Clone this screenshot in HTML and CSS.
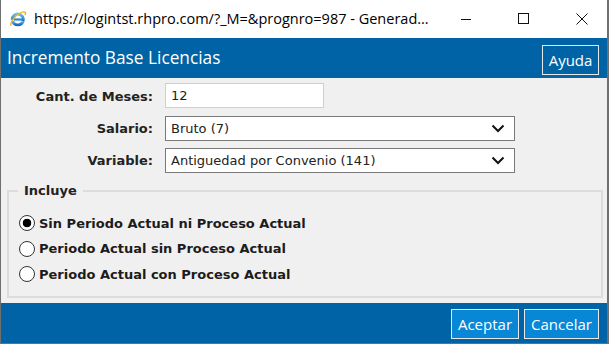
FILE: index.html
```html
<!DOCTYPE html>
<html lang="es">
<head>
<meta charset="utf-8">
<title>Incremento Base Licencias</title>
<link rel="stylesheet" href="styles.css">
</head>
<body>
<div class="window">
  <div class="titlebar">
    <svg class="ie-icon" width="18" height="18" viewBox="0 0 18 18">
      <defs>
        <linearGradient id="eg" x1="0" y1="0" x2="0" y2="1">
          <stop offset="0" stop-color="#5fc3f3"/>
          <stop offset="1" stop-color="#1569c7"/>
        </linearGradient>
      </defs>
      <path d="M3.2 9.8 A5.6 5.6 0 1 1 14 11.6" fill="none" stroke="url(#eg)" stroke-width="2.8"/>
      <path d="M14 11.6 A5.6 5.6 0 0 1 3.6 11" fill="none" stroke="url(#eg)" stroke-width="2.8"/>
      <rect x="5" y="8.4" width="8.2" height="2.2" fill="#2b8ad8"/>
      <path d="M2.2 15.6 C0.4 13.5 6 5 12 2.6 C16 1 17.4 2.2 16 5" fill="none" stroke="#f2b01e" stroke-width="1.4"/>
    </svg>
    <span class="url">https://logintst.rhpro.com/?_M=&amp;prognro=987 - Generad...</span>
    <div class="controls">
      <svg class="ctl" width="46" height="30" viewBox="0 0 46 30"><path d="M18 15.5 H28" stroke="#111" stroke-width="1"/></svg>
      <svg class="ctl" width="46" height="30" viewBox="0 0 46 30"><rect x="17.5" y="9.5" width="10" height="10" fill="none" stroke="#111" stroke-width="1"/></svg>
      <svg class="ctl" width="46" height="30" viewBox="0 0 46 30"><path d="M17.5 9.5 L28.5 20.5 M28.5 9.5 L17.5 20.5" stroke="#111" stroke-width="1"/></svg>
    </div>
  </div>
  <div class="header">
    <h1 class="title">Incremento Base Licencias</h1>
    <button class="btn btn-help" type="button">Ayuda</button>
  </div>
  <div class="content">
    <div class="form-grid">
      <label class="lbl" for="meses">Cant. de Meses:</label>
      <input class="txt" id="meses" type="text" value="12">
      <label class="lbl" for="salario">Salario:</label>
      <div class="select"><span>Bruto (7)</span><svg width="14" height="9" viewBox="0 0 14 9"><path d="M1.5 1.5 L7 7 L12.5 1.5" fill="none" stroke="#111" stroke-width="2"/></svg></div>
      <label class="lbl" for="variable">Variable:</label>
      <div class="select"><span>Antiguedad por Convenio (141)</span><svg width="14" height="9" viewBox="0 0 14 9"><path d="M1.5 1.5 L7 7 L12.5 1.5" fill="none" stroke="#111" stroke-width="2"/></svg></div>
    </div>
    <fieldset class="group">
      <legend class="legend">Incluye</legend>
      <label class="opt"><input class="radio" type="radio" name="inc" checked> Sin Periodo Actual ni Proceso Actual</label>
      <label class="opt"><input class="radio" type="radio" name="inc"> Periodo Actual sin Proceso Actual</label>
      <label class="opt"><input class="radio" type="radio" name="inc"> Periodo Actual con Proceso Actual</label>
    </fieldset>
  </div>
  <div class="footer">
    <button class="btn btn-main" type="button">Aceptar</button>
    <button class="btn btn-main" type="button">Cancelar</button>
  </div>
</div>
</body>
</html>
```

FILE: styles.css
```css
* { box-sizing: border-box; }
html, body { margin: 0; padding: 0; }
body { width: 609px; height: 344px; overflow: hidden; background: #fff; }

.window {
  width: 609px;
  height: 344px;
  border-left: 1px solid #6f6f6f;
  border-right: 2px solid #6f6f6f;
  border-bottom: 1px solid #6f6f6f;
  display: flex;
  flex-direction: column;
  background: #f0f0f0;
}

.titlebar {
  height: 38px;
  flex: none;
  background: #fff;
  display: flex;
  align-items: center;
  padding-left: 8px;
}
.ie-icon { flex: none; margin-right: 7px; margin-top: -1px; }
.url {
  font-family: "Open Sans", "Noto Sans", sans-serif;
  font-size: 14.5px;
  color: #000;
  white-space: nowrap;
  flex: 1;
  margin-top: -2px;
}
.controls { display: flex; align-self: flex-start; margin-top: 4px; margin-right: 2px; }
.ctl { display: block; margin-left: 12px; }

.header {
  height: 40px;
  flex: none;
  background: #0063a6;
  display: flex;
  align-items: center;
  justify-content: space-between;
  padding: 0 8px 0 6px;
}
.title {
  margin: 0;
  font-family: "Open Sans", "Noto Sans", sans-serif;
  font-weight: normal;
  font-size: 17.3px;
  color: #fff;
  margin-top: -2px;
}
.btn {
  font-family: "Open Sans", "Noto Sans", sans-serif;
  font-size: 15px;
  color: #fff;
  border: 1px solid #e8e8e8;
  padding: 0;
  line-height: 26px;
  height: 30px;
  cursor: pointer;
}
.btn-help { background: #0063a6; width: 57px; margin-top: 4px; }

.content {
  flex: 1;
  padding: 5px 4px 0 6px;
  display: flex;
  flex-direction: column;
}

.form-grid {
  display: grid;
  grid-template-columns: 146px 350px;
  column-gap: 12px;
  row-gap: 7px;
  align-items: center;
}
.lbl {
  text-align: right;
  font-family: "DejaVu Sans", Verdana, sans-serif;
  font-weight: bold;
  font-size: 13px;
  color: #222;
}
.txt {
  width: 159px;
  height: 25px;
  border: 1px solid #cfcfcf;
  background: #fff;
  font-family: "DejaVu Sans", Verdana, sans-serif;
  font-size: 13px;
  color: #222;
  padding: 0 5px;
  outline: none;
  margin-bottom: 1px;
}
.select {
  height: 25px;
  width: 350px;
  border: 1px solid #7a7a7a;
  background: #fff;
  display: flex;
  align-items: center;
  justify-content: space-between;
  padding: 0 9px 0 5px;
  font-family: "DejaVu Sans", Verdana, sans-serif;
  font-size: 13px;
  color: #222;
}

.group {
  margin: 10px 0 0 0;
  padding: 16px 0 0 12px;
  border: 2px solid #dcdcdc;
  height: 115px;
  display: flex;
  flex-direction: column;
  gap: 7.5px;
}
.legend {
  font-family: "DejaVu Sans", Verdana, sans-serif;
  font-weight: bold;
  font-size: 13px;
  color: #222;
  padding: 0 6px;
  margin-left: -3px;
}
.opt {
  display: flex;
  align-items: center;
  font-family: "DejaVu Sans", Verdana, sans-serif;
  font-weight: bold;
  font-size: 13px;
  color: #1c1c1c;
  height: 18px;
  gap: 4px;
}
.radio {
  appearance: none;
  -webkit-appearance: none;
  margin: 0 0 0 -2px;
  width: 16px;
  height: 16px;
  border: 1px solid #333;
  border-radius: 50%;
  background: #fff;
  flex: none;
}
.radio:checked {
  background: radial-gradient(circle, #000 0 4px, #fff 4.6px);
}

.footer {
  height: 40px;
  flex: none;
  background: #0063a6;
  display: flex;
  justify-content: flex-end;
  align-items: center;
  gap: 5px;
  padding-right: 8px;
}
.btn-main { background: #0787d6; padding: 0 4px; margin-top: 2px; }
.btn-main:first-child { width: 68px; }
.btn-main:last-child { width: 75px; }
```
